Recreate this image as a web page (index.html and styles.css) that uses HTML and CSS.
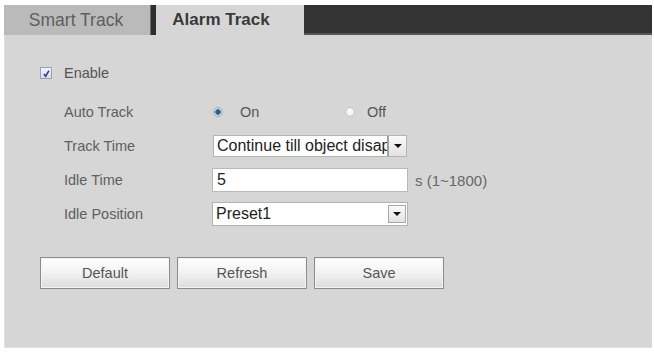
FILE: index.html
```html
<!DOCTYPE html>
<html>
<head>
<meta charset="utf-8">
<link rel="stylesheet" href="styles.css">
</head>
<body>
<div class="wrap">
  <div class="tabs">
    <div class="tab tab-off">Smart Track</div>
    <div class="tab-sep"></div>
    <div class="tab tab-on">Alarm Track</div>
    <div class="tab-fill"></div>
  </div>
  <div class="panel">
    <div class="enable-row">
      <span class="checkbox">
        <svg width="9" height="9" viewBox="0 0 9 9"><path d="M2 5 L3.6 7.2 L7 1.6" fill="none" stroke="#2f3f9a" stroke-width="1.6"/></svg>
      </span>
      <span class="enable-label">Enable</span>
    </div>
    <div class="form">
      <div class="row">
        <div class="label">Auto Track</div>
        <div class="radios">
          <span class="radio-item on-item"><span class="radio radio-on"></span><span class="rtext">On</span></span>
          <span class="radio-item"><span class="radio"></span><span class="rtext">Off</span></span>
        </div>
      </div>
      <div class="row">
        <div class="label">Track Time</div>
        <div class="select sel-short">
          <span class="sel-text">Continue till object disappears</span>
          <span class="sel-btn sel-btn-dark"><span class="tri"></span></span>
        </div>
      </div>
      <div class="row">
        <div class="label">Idle Time</div>
        <div class="input">5</div>
        <span class="unit">s (1~1800)</span>
      </div>
      <div class="row">
        <div class="label">Idle Position</div>
        <div class="select sel-tall">
          <span class="sel-text">Preset1</span>
          <span class="sel-btn"><span class="tri"></span></span>
        </div>
      </div>
    </div>
    <div class="buttons">
      <button class="btn">Default</button>
      <button class="btn">Refresh</button>
      <button class="btn">Save</button>
    </div>
  </div>
</div>
</body>
</html>
```
FILE: styles.css
```css
html, body {
  margin: 0;
  padding: 0;
  background: #ffffff;
}
body {
  font-family: "Liberation Sans", Arial, sans-serif;
}
.wrap {
  padding: 5px 2px 4px 4px;
}
.tabs {
  display: flex;
  height: 30px;
}
.tab {
  display: flex;
  align-items: center;
  justify-content: center;
  height: 30px;
}
.tab-off {
  width: 146px;
  background: #bababa;
  color: #5e5e5e;
  font-size: 17.5px;
  padding-right: 2px;
  box-sizing: border-box;
}
.tab-sep {
  width: 6px;
  background: #2e2e2e;
  border-left: 1px solid #6a6a6a;
  box-sizing: border-box;
}
.tab-on {
  width: 148px;
  background: #d6d6d6;
  color: #3a3a3a;
  font-weight: bold;
  font-size: 17px;
  padding-right: 18px;
  box-sizing: border-box;
}
.tab-fill {
  flex: 1;
  background: #333333;
  border-bottom: 2px solid #555555;
  box-sizing: border-box;
}
.panel {
  background: #d6d6d6;
  height: 313px;
  padding-top: 27px;
  box-sizing: border-box;
  border-left: 1px solid #e2e2e2;
  border-bottom: 1px solid #e0e0e0;
}
.enable-row {
  display: flex;
  align-items: center;
  height: 22px;
  padding-left: 35px;
}
.checkbox {
  border: 1px solid #9aa0b8;
  background: linear-gradient(#f4f5fa, #d9dce8);
  display: flex;
  align-items: center;
  justify-content: center;
  box-sizing: border-box;
  width: 12px;
  height: 12px;
}
.enable-label {
  margin-left: 12px;
  font-size: 14.5px;
  color: #555;
}
.form {
  margin-top: 16px;
  display: flex;
  flex-direction: column;
  gap: 10px;
  padding-left: 59px;
}
.row {
  display: flex;
  align-items: center;
  height: 24px;
}
.label {
  width: 148px;
  font-size: 14.5px;
  color: #606060;
}
.radios {
  display: flex;
  align-items: center;
  font-size: 14.5px;
  color: #555;
}
.radio-item {
  display: flex;
  align-items: center;
}
.on-item {
  width: 132px;
}
.radio {
  width: 10px;
  height: 10px;
  border-radius: 50%;
  border: 1px solid #c4c4c4;
  background: radial-gradient(circle at 50% 40%, #ffffff, #e4e4e4);
  box-sizing: border-box;
  margin-left: 1px;
}
.radio-on {
  border: 1px solid #9aaab8;
  background: radial-gradient(circle, #1f5a78 0, #2d6d8c 2.5px, #c9d3dc 3px, #e6ecf0 5px);
}
.rtext {
  margin-left: 17px;
}
.radio-item + .radio-item .rtext {
  margin-left: 12px;
}
.select {
  display: flex;
  align-items: center;
  background: #ffffff;
  border: 1px solid #b3b3b3;
  box-sizing: border-box;
  width: 196px;
  overflow: hidden;
}
.sel-short {
  height: 22px;
  margin-left: 1px;
  width: 194px;
}
.sel-tall {
  height: 24px;
}
.sel-text {
  flex: 1;
  min-width: 0;
  font-size: 16px;
  color: #222;
  padding-left: 3px;
  white-space: nowrap;
  overflow: hidden;
}
.sel-btn {
  width: 18px;
  height: 18px;
  margin-right: 1px;
  border: 1px solid #a8a8a8;
  background: linear-gradient(#fafafa, #e2e2e2);
  box-sizing: border-box;
  display: flex;
  align-items: center;
  justify-content: center;
  flex: none;
}
.sel-btn-dark {
  height: 22px;
  margin-right: -1px;
  width: 20px;
  border: 1px solid #8a8a8a;
  border-left: 2px solid #a0a0a0;
}
.tri {
  width: 0;
  height: 0;
  border-left: 4px solid transparent;
  border-right: 4px solid transparent;
  border-top: 4px solid #111;
}
.input {
  width: 196px;
  height: 24px;
  background: #ffffff;
  border: 1px solid #b8b8b8;
  box-sizing: border-box;
  font-size: 16px;
  color: #222;
  padding-left: 4px;
  display: flex;
  align-items: center;
}
.unit {
  margin-left: 7px;
  font-size: 15px;
  color: #666;
}
.buttons {
  margin-top: 31px;
  display: flex;
  gap: 7px;
  padding-left: 35px;
}
.btn {
  width: 130px;
  height: 32px;
  border: 1px solid #8c8c8c;
  border-radius: 0;
  background: linear-gradient(#ffffff 0%, #f2f2f2 50%, #dcdcdc 100%);
  box-shadow: inset 0 0 0 1px #f4f4f4;
  font-family: "Liberation Sans", Arial, sans-serif;
  font-size: 14.5px;
  color: #555;
  padding: 0;
}
```
